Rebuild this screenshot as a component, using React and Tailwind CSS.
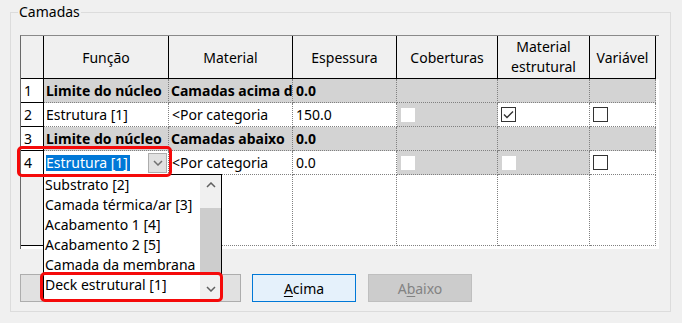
import React from "react";

// Revit-style "Camadas" (layers) editor with the Função dropdown opened on row 4

const COLS = [23, 125, 124, 104, 101, 92, 66];

function Check({ checked }) {
  return (
    <div className="w-[15px] h-[15px] border border-[#333333] bg-white flex items-center justify-center">
      {checked && (
        <svg width="11" height="9" viewBox="0 0 11 9">
          <path d="M1 4.5 L4 7.5 L10 1.5" fill="none" stroke="#333333" strokeWidth="1.4" />
        </svg>
      )}
    </div>
  );
}

function Disabled() {
  return <div className="w-[14px] h-[14px] bg-white" />;
}

function Chevron({ up, color = "#606060" }) {
  return (
    <svg width="10" height="6" viewBox="0 0 10 6">
      <path
        d={up ? "M1 5 L5 1 L9 5" : "M1 1 L5 5 L9 1"}
        fill="none"
        stroke={color}
        strokeWidth="1.5"
      />
    </svg>
  );
}

function Num({ n }) {
  return (
    <div className="w-[23px] shrink-0 h-full border-r border-b border-black bg-white pl-[3px] flex items-center">
      {n}
    </div>
  );
}

function Cell({ w, gray, bold, children, className = "" }) {
  return (
    <div
      style={{ width: w }}
      className={`shrink-0 h-full border-r border-b border-dotted border-[#808080] flex items-center overflow-hidden whitespace-nowrap pl-[2px] ${
        gray ? "bg-[#d3d3d3]" : "bg-white"
      } ${bold ? "font-bold" : ""} ${className}`}
    >
      {children}
    </div>
  );
}

export default function App() {
  const items = [
    "Substrato [2]",
    "Camada térmica/ar [3]",
    "Acabamento 1 [4]",
    "Acabamento 2 [5]",
    "Camada da membrana",
    "Deck estrutural [1]",
  ];

  return (
    <div className="relative w-[682px] h-[323px] bg-[#f0f0f0] overflow-hidden text-[14px] text-black font-['Noto_Sans',sans-serif]">
      <div className="pt-[12px] pl-[10px]">
        <div className="w-[661px] h-[300px] border border-[#dcdcdc] pl-[9px]">
          <div className="-mt-[10px] -ml-[2px] w-fit px-[1px] h-[18px] leading-[18px] bg-[#f0f0f0]">Camadas</div>

          {/* table */}
          <div className="mt-[14px] w-[639px] border-t border-l border-t-[#8a8a8a] border-l-[#696969]">
            <div className="flex h-[43px]">
              <div className="flex border-b border-black bg-[#f0f0f0]">
                <div className="w-[23px] border-r border-black" />
                {["Função", "Material", "Espessura", "Coberturas"].map((t, i) => (
                  <div
                    key={t}
                    style={{ width: COLS[i + 1] }}
                    className="border-r border-black flex items-center justify-center"
                  >
                    {t}
                  </div>
                ))}
                <div className="w-[92px] border-r border-black flex items-center justify-center text-center leading-[20px]">
                  Material
                  <br />
                  estrutural
                </div>
                <div className="w-[66px] border-r border-black flex items-center justify-center">Variável</div>
              </div>
            </div>

            <div className="bg-white w-[638px]">
              <div className="flex h-[24px]">
                <Num n="1" />
                <Cell w={125} gray bold>Limite do núcleo</Cell>
                <Cell w={124} gray bold>Camadas acima d</Cell>
                <Cell w={104} gray bold className="pl-[3px]">0.0</Cell>
                <Cell w={101} gray />
                <Cell w={92} gray />
                <Cell w={66} gray />
              </div>
              <div className="flex h-[24px]">
                <Num n="2" />
                <Cell w={125}>Estrutura [1]</Cell>
                <Cell w={124} className="pl-[3px]">&lt;Por categoria</Cell>
                <Cell w={104} className="pl-[3px]">150.0</Cell>
                <Cell w={101} gray className="pl-[4px]"><Disabled /></Cell>
                <Cell w={92} className="pl-[3px]"><Check checked /></Cell>
                <Cell w={66} className="pl-[3px]"><Check /></Cell>
              </div>
              <div className="flex h-[24px]">
                <Num n="3" />
                <Cell w={125} gray bold>Limite do núcleo</Cell>
                <Cell w={124} gray bold>Camadas abaixo</Cell>
                <Cell w={104} gray bold className="pl-[3px]">0.0</Cell>
                <Cell w={101} gray />
                <Cell w={92} gray />
                <Cell w={66} gray />
              </div>
              <div className="flex h-[24px]">
                <Num n="4" />
                <Cell w={125} className="pl-[1px] pr-[1px]">
                  <span className="bg-[#0078d7] text-white h-[16px] leading-[16px] pr-[2px]">Estrutura [1]</span>
                  <div className="ml-auto w-[19px] h-[20px] border border-[#adadad] bg-[#e1e1e1] flex items-center justify-center">
                    <Chevron color="#707070" />
                  </div>
                </Cell>
                <Cell w={124} className="pl-[3px]">&lt;Por categoria</Cell>
                <Cell w={104} className="pl-[3px]">0.0</Cell>
                <Cell w={101} gray className="pl-[4px]"><Disabled /></Cell>
                <Cell w={92} gray className="pl-[4px]"><Disabled /></Cell>
                <Cell w={66} className="pl-[3px]"><Check /></Cell>
              </div>
              <div className="flex h-[71px]">
                <div className="w-[23px] shrink-0 h-full border-r border-b border-black bg-[#f0f0f0]" />
                {COLS.slice(1).map((w, i) => (
                  <Cell key={i} w={w} />
                ))}
              </div>
              <div className="h-[3px]" />
            </div>
          </div>

          {/* buttons */}
          <div className="mt-[25px] flex gap-[11px]">
            <div className="w-[221px] h-[28px] border border-[#adadad] bg-[#e1e1e1]" />
            <div className="w-[104px] h-[28px] border border-[#0078d7] bg-[#e5f1fb] flex items-center justify-center">
              <span><u className="underline-offset-2">A</u>cima</span>
            </div>
            <div className="ml-[1px] w-[104px] h-[28px] border border-[#bfbfbf] bg-[#cccccc] text-[#838383] flex items-center justify-center">
              <span>A<u className="underline-offset-2">b</u>aixo</span>
            </div>
          </div>
        </div>
      </div>

      {/* open dropdown list */}
      <div className="absolute left-[43px] top-[174px] w-[179px] h-[126px] border border-black bg-white flex">
        <div className="w-[156px] overflow-hidden whitespace-nowrap">
          {items.map((t) => (
            <div key={t} className="h-[20px] leading-[20px] pl-[1px]">{t}</div>
          ))}
        </div>
        <div className="w-[21px] bg-[#f0f0f0] flex flex-col">
          <div className="h-[20px] flex items-center justify-center"><Chevron up /></div>
          <div className="h-[13px]" />
          <div className="h-[65px] bg-[#cdcdcd]" />
          <div className="h-[6px]" />
          <div className="h-[20px] flex items-center justify-center"><Chevron /></div>
        </div>
      </div>

      {/* red highlight annotations */}
      <div className="absolute left-[17px] top-[146px] w-[155px] h-[31px] border-[3px] border-[#f50a0a] rounded-[5px]" />
      <div className="absolute left-[40px] top-[272px] w-[183px] h-[30px] border-[3px] border-[#f50a0a] rounded-[5px]" />
    </div>
  );
}
